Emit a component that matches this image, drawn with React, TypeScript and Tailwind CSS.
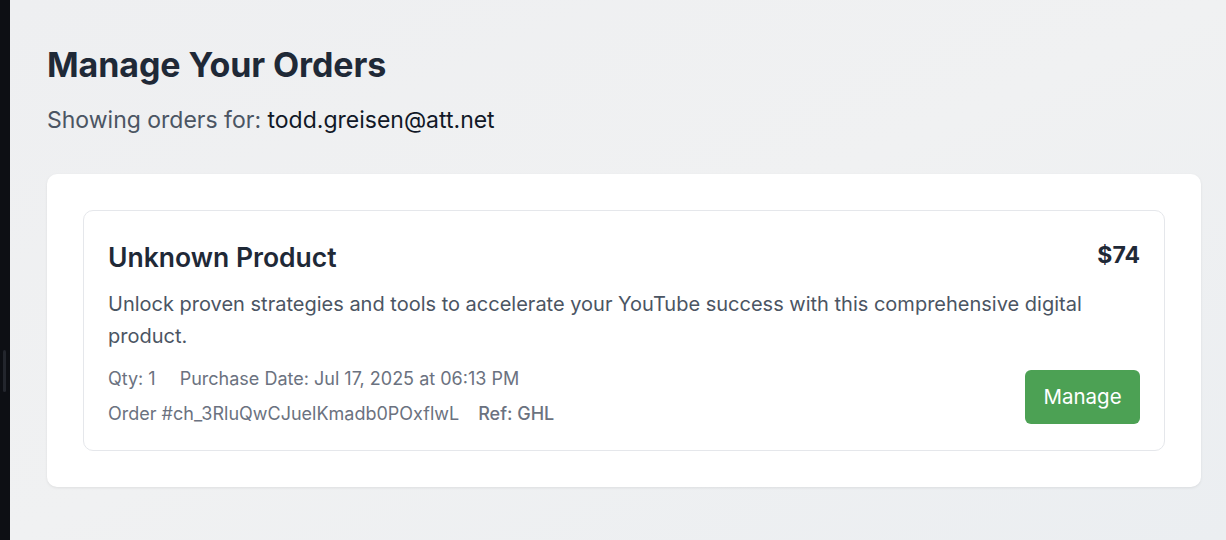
export default function App() {
  return (
    <div
      className="flex min-h-[540px] w-full bg-[#eef0f2]"
      style={{ fontFamily: "Inter, 'Noto Sans', sans-serif" }}
    >
      <div className="relative w-[10px] shrink-0 bg-[#0d0f14]">
        <div className="absolute left-[3px] top-[350px] h-[42px] w-[3px] rounded-full bg-[#23262d]" />
      </div>
      <main className="flex-1 bg-gradient-to-br from-[#eeeff1] via-[#f0f1f2] to-[#ebeef1] pl-[37px] pr-[25px] pt-[45px]">
        <h1 className="text-[34px] font-bold leading-[40px] tracking-[-0.1px] text-[#1f2937]">
          Manage Your Orders
        </h1>
        <p className="mt-[20px] text-[23px] leading-[30px] text-[#4b5563]">
          Showing orders for: <span className="text-[#111827]">todd.greisen@att.net</span>
        </p>

        <section className="mt-[39px] rounded-[10px] bg-white p-[36px] shadow-[0_1px_3px_rgba(0,0,0,0.08)]">
          <div className="rounded-[10px] border border-[#e5e7eb] px-[24px] pb-[23px] pt-[28px]">
            <div className="flex items-start justify-between">
              <h2 className="text-[26.5px] font-semibold leading-[36px] text-[#1f2937]">
                Unknown Product
              </h2>
              <span className="text-[23px] font-bold leading-[32px] text-[#1f2937]">$74</span>
            </div>
            <p className="mt-[13px] text-[20px] leading-[32px] text-[#4b5563]">
              Unlock proven strategies and tools to accelerate your YouTube success with this
              comprehensive digital product.
            </p>
            <div className="mt-[14px] flex items-end justify-between">
              <div className="text-[18px] leading-[26px] text-[#6b7280]">
                <div className="flex gap-[24px]">
                  <span>Qty: 1</span>
                  <span>Purchase Date: Jul 17, 2025 at 06:13 PM</span>
                </div>
                <div className="mt-[9px] flex gap-[19px]">
                  <span>Order #ch_3RluQwCJuelKmadb0POxflwL</span>
                  <span className="font-medium">Ref: GHL</span>
                </div>
              </div>
              <button className="mb-[3px] h-[54px] w-[115px] rounded-[6px] bg-[#4ca154] text-[20.5px] text-white">
                Manage
              </button>
            </div>
          </div>
        </section>
      </main>
    </div>
  );
}
